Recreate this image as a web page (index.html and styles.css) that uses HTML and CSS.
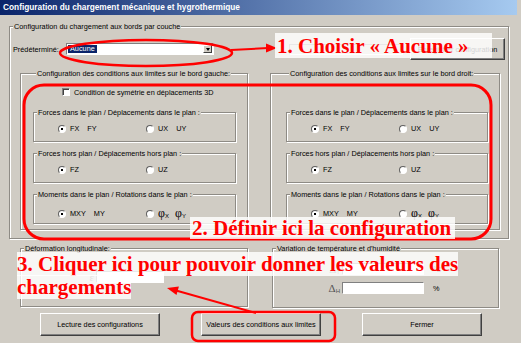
FILE: index.html
```html
<!DOCTYPE html>
<html lang="fr">
<head>
    <meta charset="UTF-8">
    <title>Configuration du chargement mécanique et hygrothermique</title>
    <link rel="stylesheet" href="styles.css">
</head>
<body>
<div class="window">
    <div class="titlebar">Configuration du chargement mécanique et hygrothermique</div>

    <div class="group outer">
        <div class="group-title">Configuration du chargement aux bords par couche</div>
        <div class="preset-row">
            <span class="preset-label">Prédéterminé:</span>
            <div class="combo">
                <span class="combo-sel">Aucune</span>
                <span class="combo-btn"><span class="tri"></span></span>
            </div>
            <div class="textbox name-box"></div>
            <div class="btn btn-save">Enregistrer configuration</div>
        </div>

        <div class="edges">
            <!-- bord gauche -->
            <div class="group edge edge-left">
                <div class="group-title">Configuration des conditions aux limites sur le bord gauche:</div>
                <div class="check-row">
                    <span class="checkbox"></span>
                    <span>Condition de symétrie en déplacements 3D</span>
                </div>
                <div class="group sub">
                    <div class="group-title">Forces dans le plan / Déplacements dans le plan :</div>
                    <div class="radio-row">
                        <div class="opt"><span class="radio on"></span><span class="pair"><span>FX</span><span>FY</span></span></div>
                        <div class="opt"><span class="radio"></span><span class="pair"><span>UX</span><span>UY</span></span></div>
                    </div>
                </div>
                <div class="group sub">
                    <div class="group-title">Forces hors plan / Déplacements hors plan :</div>
                    <div class="radio-row">
                        <div class="opt"><span class="radio on"></span><span>FZ</span></div>
                        <div class="opt"><span class="radio"></span><span>UZ</span></div>
                    </div>
                </div>
                <div class="group sub">
                    <div class="group-title">Moments dans le plan / Rotations dans le plan :</div>
                    <div class="radio-row">
                        <div class="opt"><span class="radio on"></span><span class="pair"><span>MXY</span><span>MY</span></span></div>
                        <div class="opt"><span class="radio"></span><span class="pair phi"><span>φ<sub>X</sub></span><span>φ<sub>Y</sub></span></span></div>
                    </div>
                </div>
            </div>

            <!-- bord droit -->
            <div class="group edge edge-right">
                <div class="group-title">Configuration des conditions aux limites sur le bord droit:</div>
                <div class="check-row spacer"></div>
                <div class="group sub">
                    <div class="group-title">Forces dans le plan / Déplacements dans le plan :</div>
                    <div class="radio-row">
                        <div class="opt"><span class="radio on"></span><span class="pair"><span>FX</span><span>FY</span></span></div>
                        <div class="opt"><span class="radio"></span><span class="pair"><span>UX</span><span>UY</span></span></div>
                    </div>
                </div>
                <div class="group sub">
                    <div class="group-title">Forces hors plan / Déplacements hors plan :</div>
                    <div class="radio-row">
                        <div class="opt"><span class="radio on"></span><span>FZ</span></div>
                        <div class="opt"><span class="radio"></span><span>UZ</span></div>
                    </div>
                </div>
                <div class="group sub">
                    <div class="group-title">Moments dans le plan / Rotations dans le plan :</div>
                    <div class="radio-row">
                        <div class="opt"><span class="radio on"></span><span class="pair"><span>MXY</span><span>MY</span></span></div>
                        <div class="opt"><span class="radio"></span><span class="pair phi"><span>φ<sub>X</sub></span><span>φ<sub>Y</sub></span></span></div>
                    </div>
                </div>
            </div>
        </div>
    </div>

    <div class="lower">
        <div class="group strain">
            <div class="group-title">Déformation longitudinale:</div>
            <div class="field-row first">
                <span class="field-label sym">ε</span>
                <div class="textbox field"></div>
            </div>
        </div>
        <div class="group thermo">
            <div class="group-title">Variation de température et d'humidité</div>
            <div class="field-row first">
                <span class="field-label sym">Δ<sub>T</sub></span>
                <div class="textbox field"></div>
                <span class="unit">°C</span>
            </div>
            <div class="field-row">
                <span class="field-label sym">Δ<sub>H</sub></span>
                <div class="textbox field"></div>
                <span class="unit">%</span>
            </div>
        </div>
    </div>

    <div class="actions">
        <div class="btn">Lecture des configurations</div>
        <div class="btn">Valeurs des conditions aux limites</div>
        <div class="btn">Fermer</div>
    </div>

    <!-- annotations -->
    <svg class="marks" width="521" height="343" viewBox="0 0 521 343">
        <ellipse cx="146" cy="53" rx="86" ry="13" fill="none" stroke="#f00" stroke-width="2.5"/>
        <line x1="231" y1="50" x2="268" y2="48" stroke="#f00" stroke-width="2"/>
        <polygon points="277,48 266,43.5 266,52.5" fill="#f00"/>
        <rect x="24" y="85" width="467" height="154" rx="20" fill="none" stroke="#f00" stroke-width="3"/>
        <rect x="192" y="312" width="143" height="29" rx="6" fill="none" stroke="#f00" stroke-width="2.5"/>
        <line x1="256" y1="313" x2="176" y2="290.5" stroke="#f00" stroke-width="2"/>
        <polygon points="167,288 178.9,286.6 176.5,295" fill="#f00"/>
    </svg>
    <div class="note note-1">1. Choisir « Aucune »</div>
    <div class="note note-2">2. Définir ici la configuration</div>
    <div class="note note-3"><span>3. Cliquer ici pour pouvoir donner les valeurs des</span><br><span>chargements</span></div>
</div>
</body>
</html>
```

FILE: styles.css
```css
/* boîte de dialogue style Windows classique */
* {
    box-sizing: border-box;
}
body {
    margin: 0;
    font-family: "Liberation Sans", Arial, sans-serif;
    font-size: 7.3px;
    color: #000;
    background: #d0ccc4;
}
.window {
    position: relative;
    width: 521px;
    height: 343px;
    overflow: hidden;
    background: #d0ccc4;
}
.titlebar {
    width: 517px;
    height: 15px;
    padding-left: 3px;
    background: linear-gradient(to right, #0a246a, #a6caf0);
    color: #fff;
    font-weight: bold;
    font-size: 8.3px;
    line-height: 15px;
    white-space: nowrap;
}

/* cadres */
.group {
    border: 1px solid #8e8b85;
    box-shadow: inset 1px 1px 0 #fff, 1px 1px 0 #fff;
}
.group-title {
    display: table;
    margin: -5px 0 0 3px;
    padding: 0 1px;
    background: #d0ccc4;
    line-height: 9px;
    white-space: nowrap;
}
.outer {
    width: 500px;
    height: 213px;
    margin: 11px 0 0 9px;
}
.preset-row {
    display: flex;
    align-items: center;
    height: 22px;
    margin-top: 7px;
    padding-left: 3px;
}
.preset-label {
    width: 53px;
}
.combo {
    display: flex;
    align-items: center;
    width: 148px;
    height: 12px;
    padding: 1px;
    background: #fff;
    border: 1px solid;
    border-color: #808080 #fff #fff #808080;
}
.combo-sel {
    padding: 0 2px;
    background: #0a246a;
    color: #fff;
    line-height: 8px;
}
.combo-btn {
    display: flex;
    align-items: center;
    justify-content: center;
    width: 9px;
    height: 100%;
    margin-left: auto;
    background: #d0ccc4;
    border: 1px solid;
    border-color: #fff #404040 #404040 #fff;
}
.tri {
    width: 0;
    height: 0;
    border-left: 2.5px solid transparent;
    border-right: 2.5px solid transparent;
    border-top: 3px solid #000;
}
.textbox {
    background: #fff;
    border: 1px solid;
    border-color: #808080 #fff #fff #808080;
}
.name-box {
    width: 114px;
    height: 11px;
    margin-left: 75px;
    background: transparent;
}
.btn {
    display: flex;
    align-items: center;
    justify-content: center;
    width: 120px;
    height: 23px;
    background: #d0ccc4;
    border: 1px solid;
    border-color: #fff #404040 #404040 #fff;
    box-shadow: inset -1px -1px 0 #808080;
    white-space: nowrap;
}
.btn-save {
    width: 95px;
    height: 22px;
    margin-left: 7px;
}

.edges {
    display: flex;
    gap: 22px;
    margin-top: 13px;
    padding-left: 10px;
}
.edge {
    height: 157px;
}
.edge-left {
    width: 228px;
    padding-left: 12px;
}
.edge-right {
    width: 230px;
    padding-left: 15px;
}
.check-row {
    display: flex;
    align-items: center;
    gap: 4px;
    height: 8px;
    margin: 10px 0 16px 29px;
}
.checkbox {
    width: 8px;
    height: 8px;
    background: #fff;
    border: 1px solid;
    border-color: #808080 #fff #fff #808080;
    box-shadow: inset 1px 1px 0 #404040;
}
.sub {
    width: 203px;
    height: 30px;
    margin-bottom: 11px;
}
.edge-right .sub {
    width: 202px;
}
.radio-row {
    display: grid;
    grid-template-columns: 88px auto;
    height: 9px;
    margin-top: 7px;
    padding-left: 24px;
}
.opt {
    display: flex;
    align-items: center;
    gap: 4px;
}
.radio {
    position: relative;
    width: 8px;
    height: 8px;
    border-radius: 50%;
    background: #fff;
    border: 1px solid;
    border-color: #606060 #fff #fff #606060;
}
.radio.on::after {
    content: "";
    position: absolute;
    left: 2px;
    top: 2px;
    width: 2px;
    height: 2px;
    background: #000;
}
.pair {
    display: flex;
    gap: 8px;
}
.phi {
    font-family: "Liberation Serif", "Times New Roman", serif;
    font-size: 12px;
    gap: 6px;
}
.phi sub,
.sym sub {
    font-family: "Liberation Sans", Arial, sans-serif;
    font-size: 6px;
    vertical-align: -1px;
}

/* cadres du bas */
.lower {
    display: flex;
    gap: 24px;
    margin-top: 9px;
    padding-left: 20px;
}
.strain {
    width: 228px;
    height: 59px;
}
.thermo {
    width: 227px;
    height: 60px;
}
.field-row {
    display: flex;
    align-items: center;
    height: 12px;
    margin-top: 7px;
}
.strain .field-row.first {
    margin-top: 18px;
}
.thermo .field-row.first {
    margin-top: 10px;
}
.field-label {
    text-align: right;
    padding-right: 2px;
}
.strain .field-label {
    width: 75px;
}
.thermo .field-label {
    width: 69px;
}
.sym {
    font-family: "Liberation Serif", "Times New Roman", serif;
    font-size: 11px;
    color: #555;
}
.field {
    width: 68px;
    height: 12px;
}
.thermo .field {
    width: 82px;
}
.unit {
    margin-left: 9px;
}

.actions {
    display: flex;
    gap: 41px;
    margin-top: 5px;
    padding-left: 40px;
}

/* annotations rouges */
.marks {
    position: absolute;
    left: 0;
    top: 0;
}
.note {
    position: absolute;
    color: #f00;
    font-family: "Liberation Serif", "Times New Roman", serif;
    font-weight: bold;
    font-size: 21px;
    line-height: 23px;
    white-space: nowrap;
}
.note-1 {
    left: 275px;
    top: 33px;
    width: 217px;
    height: 25px;
    padding: 2px 0 0 2px;
    background: rgba(255, 255, 255, 0.82);
}
.note-2 {
    left: 190px;
    top: 217px;
    width: 265px;
    height: 22px;
    padding-left: 2px;
    line-height: 22px;
    background: rgba(255, 255, 255, 0.82);
}
.note-3 {
    left: 17px;
    top: 253px;
}
.note-3 span {
    background: rgba(255, 255, 255, 0.82);
}
```
